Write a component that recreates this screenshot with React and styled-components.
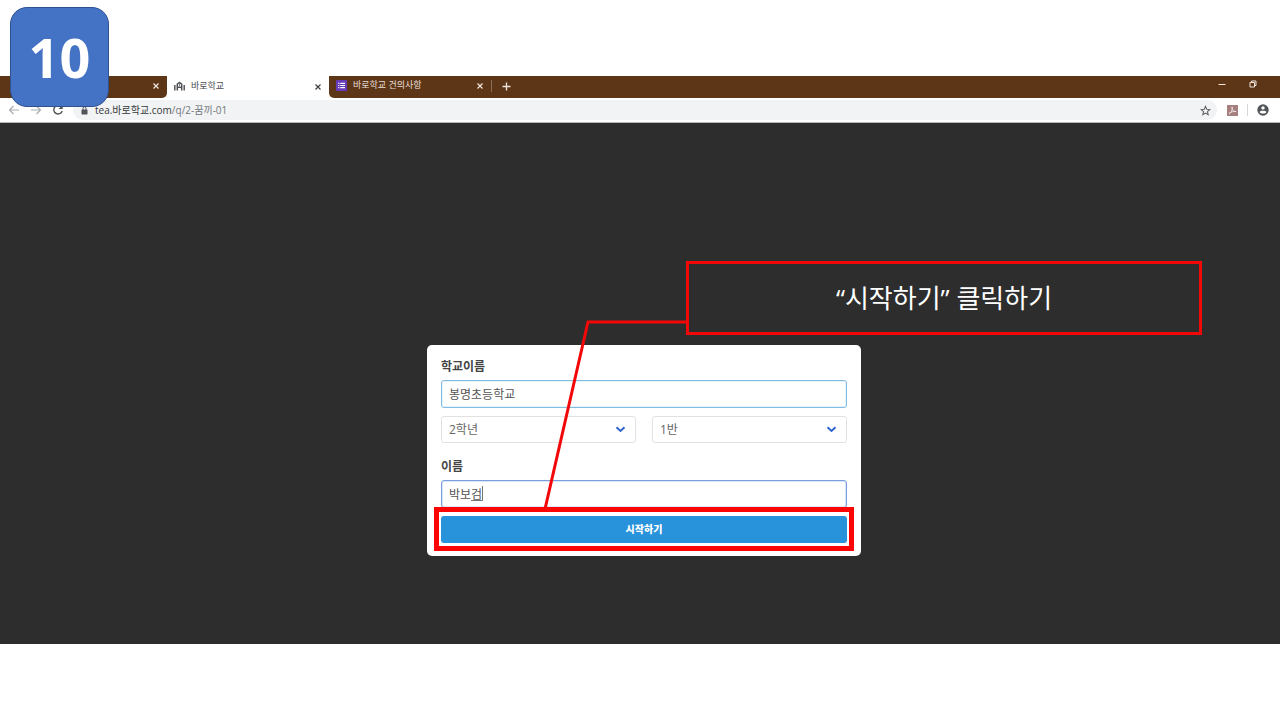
import React from "react";
import styled, { createGlobalStyle } from "styled-components";

const GlobalStyle = createGlobalStyle`
  *, *::before, *::after { box-sizing: border-box; }
  body {
    margin: 0;
    background: #fff;
    font-family: "Open Sans", "Noto Sans CJK KR", sans-serif;
  }
  button, input, select { font-family: inherit; margin: 0; }
`;

const Slide = styled.div`
  position: relative;
  display: flex;
  flex-direction: column;
  min-height: 100vh;
  padding: 76px 0;
  overflow: hidden;
`;

const StepBadge = styled.div`
  position: absolute;
  z-index: 2;
  left: 10px;
  top: 7px;
  width: 99px;
  height: 100px;
  display: flex;
  align-items: center;
  justify-content: center;
  border: 1px solid #2f528f;
  border-radius: 17px;
  background: #4472c4;
  color: #fff;
  font-family: "Noto Sans", "Open Sans", sans-serif;
  font-size: 54px;
  font-weight: 700;
  line-height: 60px;
`;

const Browser = styled.div`
  flex: 1;
  display: flex;
  flex-direction: column;
`;

const TabStrip = styled.div`
  display: flex;
  height: 22px;
  background: #fff;
`;

const StripStart = styled.div`
  display: flex;
  align-items: center;
  justify-content: flex-end;
  width: 167px;
  padding: 0 5px 2px 0;
  background: #5c3617;
  border-radius: 0 0 5px 0;
`;

const StripRest = styled.div`
  flex: 1;
  display: flex;
  align-items: center;
  padding-bottom: 2px;
  background: #5c3617;
  border-radius: 0 0 0 5px;
`;

const Tab = styled.div`
  display: flex;
  align-items: center;
  width: 162px;
  padding: 0 5px 0 7px;
  color: ${(p) => (p.$active ? "#4a4d51" : "#eadfd8")};
`;

const TabTitle = styled.button`
  flex: 1;
  display: flex;
  align-items: center;
  gap: 6px;
  padding: 0 0 2px;
  border: 0;
  background: none;
  color: inherit;
  font-size: 9px;
  line-height: 14px;
  white-space: nowrap;
`;

const IconButton = styled.button`
  display: flex;
  align-items: center;
  justify-content: center;
  width: ${(p) => p.$w || 12}px;
  height: 14px;
  padding: 0;
  border: 0;
  background: none;
  color: ${(p) => p.$color || "#3c4043"};
`;

const Divider = styled.span`
  width: 1px;
  height: 12px;
  background: ${(p) => p.$color};
`;

const WindowButtons = styled.div`
  display: flex;
  gap: 19px;
  margin-left: auto;
  padding: 0 21px 4px 0;
`;

const Toolbar = styled.div`
  display: flex;
  align-items: center;
  height: 25px;
  padding: 0 11px 0 8px;
  border-bottom: 1px solid #b5b5b5;
`;

const NavButtons = styled.div`
  display: flex;
  gap: 10px;
  margin-right: 9px;
`;

const AddressBar = styled.div`
  flex: 1;
  display: flex;
  align-items: center;
  height: 20px;
  padding: 0 6px 0 8px;
  border-radius: 10px;
  background: #f1f3f4;
`;

const Address = styled.div`
  flex: 1;
  margin-left: 7px;
  color: #73777b;
  font-size: 10px;
  line-height: 16px;

  span { color: #35383b; }
`;

const ToolbarEnd = styled.div`
  display: flex;
  align-items: center;
  gap: 9px;
  padding-left: 9px;
`;

const Page = styled.main`
  flex: 1;
  padding: 222px 0 88px 8px;
  background: #2d2d2d;
`;

const Card = styled.form`
  position: relative;
  width: 434px;
  max-width: 100%;
  margin: 0 auto;
  padding: 13px 14px;
  border-radius: 5px;
  background: #fff;
`;

const FieldLabel = styled.label`
  display: block;
  margin-bottom: 5px;
  color: #444;
  font-size: 12px;
  font-weight: 700;
  line-height: 17px;
`;

const InputWrap = styled.div`
  position: relative;
  margin-bottom: 8px;
`;

const TextInput = styled.input`
  display: block;
  width: 100%;
  height: 28px;
  padding: 0 7px;
  border: 1px solid ${(p) => (p.$focused ? "#7b9de0" : "#82bce3")};
  border-radius: 3px;
  outline: 0;
  box-shadow: inset 0 0 0 1px ${(p) => (p.$focused ? "#dbe6f8" : "#e6f4fc")};
  background: #fff;
  color: #555;
  font-size: 12px;
`;

const Composition = styled.span`
  position: absolute;
  left: 30px;
  top: 6px;
  width: 12px;
  height: 15px;
  border-right: 1px solid #777;
  border-bottom: 1px solid #777;
`;

const SelectRow = styled.div`
  display: grid;
  grid-template-columns: 1fr 1fr;
  gap: 16px;
  margin-bottom: 15px;
`;

const SelectWrap = styled.div`
  position: relative;

  svg {
    position: absolute;
    right: 10px;
    top: 10px;
    pointer-events: none;
  }
`;

const Select = styled.select`
  appearance: none;
  display: block;
  width: 100%;
  height: 27px;
  padding: 0 7px;
  border: 1px solid #e2e2e2;
  border-radius: 3px;
  background: #fff;
  color: #666;
  font-size: 12px;
`;

const SubmitWrap = styled.div`
  position: relative;
`;

const Submit = styled.button`
  display: block;
  width: 100%;
  height: 27px;
  padding: 0 0 2px;
  border: 0;
  border-radius: 3px;
  background: #2892db;
  color: #fff;
  font-size: 10px;
  font-weight: 900;
`;

const Highlight = styled.span`
  position: absolute;
  inset: -9px -7px -8px;
  border: 5px solid #fb0505;
  pointer-events: none;
`;

const Callout = styled.div`
  position: absolute;
  left: 259px;
  top: -84px;
  width: 516px;
  height: 74px;
  display: flex;
  align-items: center;
  justify-content: center;
  border: 3px solid #f20808;
  color: #fff;
  font-size: 26px;
  line-height: 36px;
  white-space: nowrap;
`;

const Leader = styled.svg`
  position: absolute;
  left: 113px;
  top: -30px;
  pointer-events: none;
`;

const CloseIcon = () => (
  <svg width="8" height="8" viewBox="0 0 8 8" aria-hidden="true">
    <path d="M1.500 1.500L6.500 6.500M6.500 1.500L1.500 6.500" stroke="currentColor" strokeWidth="1.2" />
  </svg>
);

const SchoolIcon = () => (
  <svg width="11" height="11" viewBox="0 0 11 11" aria-hidden="true">
    <path d="M0.800 9.500V4M10.200 9.500V4" fill="none" stroke="#55595d" strokeWidth="1.500" />
    <path d="M3.300 9.500V3.200L5.500 1.500L7.700 3.200V9.500M3.300 6.300H7.700" fill="none" stroke="#4e5256" strokeWidth="1.500" />
    <path d="M5.500 1.500V5" stroke="#7a7e82" />
  </svg>
);

const FormIcon = () => (
  <svg width="11" height="11" viewBox="0 0 11 11" aria-hidden="true">
    <rect width="11" height="11" rx="1" fill="#673ab7" />
    <path d="M4.300 3.300H9M4.300 5.500H9M4.300 7.700H9M2.200 3.300H3.400M2.200 5.500H3.400M2.200 7.700H3.400" stroke="#fff" strokeWidth="1.200" />
  </svg>
);

const ArrowIcon = ({ flip }) => (
  <svg width="12" height="10" viewBox="0 0 12 10" aria-hidden="true">
    <path d={flip ? "M1 5H10.500M6.500 1L10.500 5L6.500 9" : "M11 5H1.500M5.500 1L1.500 5L5.500 9"} fill="none" stroke="#a9acaf" strokeWidth="1.200" />
  </svg>
);

const ReloadIcon = () => (
  <svg width="12" height="12" viewBox="0 0 12 12" aria-hidden="true">
    <path d="M9.600 3.200A4.300 4.300 0 1 0 10.200 7" fill="none" stroke="#4f5357" strokeWidth="1.400" />
    <path d="M10.700 0.800V5H6.500Z" fill="#4f5357" />
  </svg>
);

const LockIcon = () => (
  <svg width="7" height="9" viewBox="0 0 7 9" aria-hidden="true">
    <rect x="0.500" y="3.400" width="6" height="5" rx="0.600" fill="#505458" />
    <path d="M2 4V2.300A1.500 1.500 0 0 1 5 2.300V4" fill="none" stroke="#505458" />
  </svg>
);

const StarIcon = () => (
  <svg width="11" height="11" viewBox="0 0 24 24" aria-hidden="true">
    <path d="M12 3L14.700 9.300L21.500 9.900L16.300 14.400L17.900 21L12 17.500L6.100 21L7.700 14.400L2.500 9.900L9.300 9.300Z" fill="none" stroke="#5a5e62" strokeWidth="2.200" />
  </svg>
);

const PdfIcon = () => (
  <svg width="11" height="11" viewBox="0 0 11 11" aria-hidden="true">
    <rect width="11" height="11" fill="#a67f7f" />
    <path d="M2 9C4 8 5.600 5 5.300 2.200C5.200 1.500 4.700 2 4.900 3C5.400 5 7 6.600 9.200 6.700C8 6 4.500 6.500 2 8.300" fill="none" stroke="#f1e4e4" strokeWidth="0.900" />
  </svg>
);

const ProfileIcon = () => (
  <svg width="12" height="12" viewBox="0 0 12 12" aria-hidden="true">
    <circle cx="6" cy="6" r="5.700" fill="#505458" />
    <circle cx="6" cy="3.900" r="1.700" fill="#fff" />
    <path d="M2.500 8.100C3.200 6.200 8.800 6.200 9.500 8.100C8.500 10.100 3.500 10.100 2.500 8.100Z" fill="#fff" />
  </svg>
);

const RestoreIcon = () => (
  <svg width="8" height="8" viewBox="0 0 8 8" aria-hidden="true">
    <path d="M1 2.500H5.500V7H1ZM2.500 2.500V1H7V5.500H5.500" fill="none" stroke="#f0e6df" />
  </svg>
);

const Chevron = () => (
  <svg width="11" height="7" viewBox="0 0 11 7" aria-hidden="true">
    <path d="M1.500 1.200L5.500 4.900L9.500 1.200" fill="none" stroke="#2c62c9" strokeWidth="1.900" />
  </svg>
);

export default function App() {
  return (
    <Slide>
      <GlobalStyle />
      <StepBadge>10</StepBadge>
      <Browser>
        <TabStrip>
          <StripStart>
            <IconButton type="button" aria-label="탭 닫기" $color="#f0e6df"><CloseIcon /></IconButton>
          </StripStart>
          <Tab $active>
            <TabTitle type="button"><SchoolIcon />바로학교</TabTitle>
            <IconButton type="button" aria-label="탭 닫기"><CloseIcon /></IconButton>
          </Tab>
          <StripRest>
            <Tab>
              <TabTitle type="button"><FormIcon />바로학교 건의사항</TabTitle>
              <IconButton type="button" aria-label="탭 닫기" $color="#f0e6df"><CloseIcon /></IconButton>
            </Tab>
            <Divider $color="#8b6f5b" />
            <IconButton type="button" aria-label="새 탭" $w={28} $color="#f0e6df">
              <svg width="9" height="9" viewBox="0 0 9 9" aria-hidden="true">
                <path d="M4.500 0.500V8.500M0.500 4.500H8.500" stroke="currentColor" strokeWidth="1.300" />
              </svg>
            </IconButton>
            <WindowButtons>
              <IconButton type="button" aria-label="최소화" $color="#f0e6df">
                <svg width="8" height="8" viewBox="0 0 8 8" aria-hidden="true">
                  <path d="M0.500 4.500H7.500" stroke="currentColor" />
                </svg>
              </IconButton>
              <IconButton type="button" aria-label="이전 크기로 복원"><RestoreIcon /></IconButton>
            </WindowButtons>
          </StripRest>
        </TabStrip>
        <Toolbar>
          <NavButtons>
            <IconButton type="button" aria-label="뒤로"><ArrowIcon /></IconButton>
            <IconButton type="button" aria-label="앞으로"><ArrowIcon flip /></IconButton>
            <IconButton type="button" aria-label="새로고침"><ReloadIcon /></IconButton>
          </NavButtons>
          <AddressBar>
            <LockIcon />
            <Address><span>tea.바로학교.com</span>/q/2-꿈끼-01</Address>
            <IconButton type="button" aria-label="북마크"><StarIcon /></IconButton>
          </AddressBar>
          <ToolbarEnd>
            <IconButton type="button" aria-label="PDF"><PdfIcon /></IconButton>
            <Divider $color="#d5d7d9" />
            <IconButton type="button" aria-label="프로필"><ProfileIcon /></IconButton>
          </ToolbarEnd>
        </Toolbar>
        <Page>
          <Card onSubmit={(e) => e.preventDefault()}>
            <FieldLabel htmlFor="school">학교이름</FieldLabel>
            <InputWrap>
              <TextInput id="school" type="text" defaultValue="봉명초등학교" />
            </InputWrap>
            <SelectRow>
              <SelectWrap>
                <Select aria-label="학년" defaultValue="2학년"><option>2학년</option></Select>
                <Chevron />
              </SelectWrap>
              <SelectWrap>
                <Select aria-label="반" defaultValue="1반"><option>1반</option></Select>
                <Chevron />
              </SelectWrap>
            </SelectRow>
            <FieldLabel htmlFor="student">이름</FieldLabel>
            <InputWrap>
              <TextInput id="student" type="text" defaultValue="박보검" $focused />
              <Composition />
            </InputWrap>
            <SubmitWrap>
              <Submit type="submit">시작하기</Submit>
              <Highlight />
            </SubmitWrap>
            <Leader width="147" height="194" viewBox="0 0 147 194" aria-hidden="true">
              <path d="M5 194L48 7H147" fill="none" stroke="#f20808" strokeWidth="3" />
            </Leader>
            <Callout>“시작하기” 클릭하기</Callout>
          </Card>
        </Page>
      </Browser>
    </Slide>
  );
}
